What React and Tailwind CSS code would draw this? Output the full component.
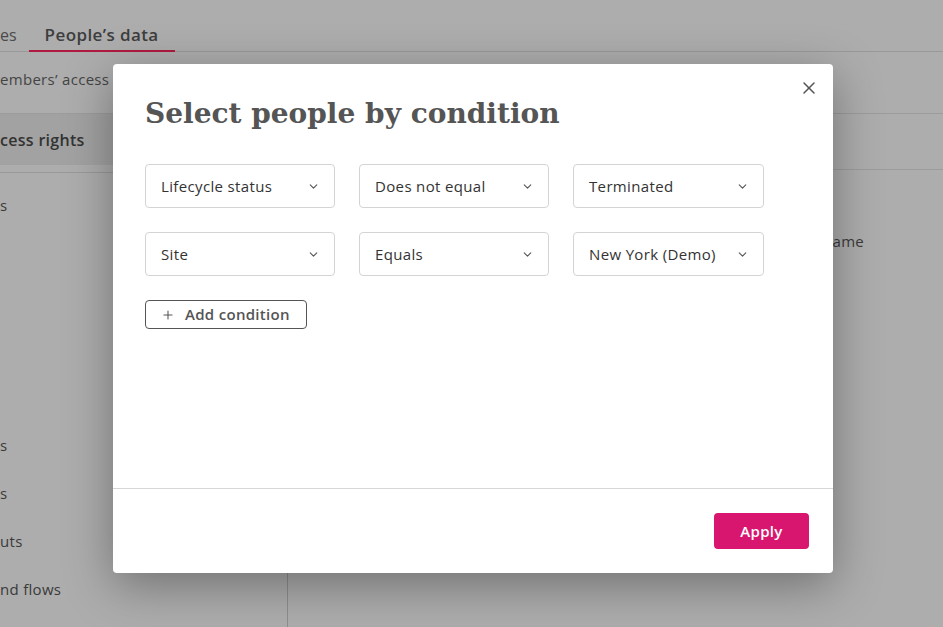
import { X, ChevronDown, Plus } from 'lucide-react';

const ROWS = [
  ['Lifecycle status', 'Does not equal', 'Terminated'],
  ['Site', 'Equals', 'New York (Demo)'],
];

function Select({ value }) {
  return (
    <div className="h-[44px] border border-[#d4d4d4] rounded-[4px] flex items-center justify-between pl-[15px] pr-[14px] text-[15px] tracking-[0.35px] text-[#333]">
      <span>{value}</span>
      <ChevronDown className="w-[13px] h-[13px] text-[#555]" strokeWidth={2} />
    </div>
  );
}

export default function App() {
  return (
    <div className="relative w-[943px] h-[627px] overflow-hidden bg-[#adadad] text-[#3a3a3a] font-['Open_Sans','Liberation_Sans',sans-serif]">
      {/* page behind the overlay */}
      <div className="h-[52px] border-b border-[#999] flex items-end">
        <span className="text-[16px] pb-[4px] text-[#4a4a4a]">es</span>
        <span className="ml-[12px] px-[16px] pb-[3px] text-[17px] tracking-[0.4px] font-semibold text-[#3d3d3d] border-b-2 border-[#b01a40] -mb-[1px]">People’s data</span>
      </div>
      <div className="h-[62px] border-b border-[#9c9c9c] flex items-center text-[15px] tracking-[0.3px] text-[#444] pb-[7px]">
        embers’ access to people’s data
      </div>
      <div className="flex h-full">
        <div className="w-[288px] border-r border-[#8e8e8e] shrink-0">
          <div className="h-[51px] bg-[#a2a2a2] flex items-center text-[16px] tracking-[0.3px] font-semibold text-[#333]">cess rights</div>
          <div className="h-[8px] border-b border-[#999]" />
          <div className="text-[15px] tracking-[0.3px] font-medium text-[#3a3a3a] pt-[8px]">
            <div className="h-[48px] flex items-center">s</div>
            <div className="h-[192px]" />
            <div className="h-[48px] flex items-center">s</div>
            <div className="h-[48px] flex items-center">s</div>
            <div className="h-[48px] flex items-center">uts</div>
            <div className="h-[48px] flex items-center">nd flows</div>
          </div>
        </div>
        <div className="flex-1">
          <div className="h-[56px] border-b border-[#9c9c9c]" />
          <div className="pt-[60px] pl-[535px] text-[15px] tracking-[0.3px] text-[#3a3a3a]">name</div>
        </div>
      </div>

      {/* modal */}
      <div className="absolute left-[113px] top-[64px] w-[720px] h-[509px] bg-white rounded-[4px] shadow-[0_12px_48px_rgba(0,0,0,0.35)] flex flex-col">
        <button className="absolute right-[14px] top-[14px] text-[#555]">
          <X className="w-[20px] h-[20px]" strokeWidth={1.8} />
        </button>
        <div className="flex-1 px-[32px] pt-[30px]">
          <h2 className="font-['DejaVu_Serif',serif] font-bold text-[28px] leading-[40px] text-[#555]">
            Select people by condition
          </h2>
          <div className="mt-[30px] flex flex-col gap-[24px] w-[620px]">
            {ROWS.map((row, i) => (
              <div key={i} className="grid grid-cols-[190px_190px_191px] gap-x-[24px]">
                {row.map((v) => <Select key={v} value={v} />)}
              </div>
            ))}
          </div>
          <button className="mt-[24px] h-[29px] w-[162px] border border-[#555] rounded-[4px] flex items-center pl-[15px] gap-[10px] text-[15px] tracking-[0.3px] font-semibold text-[#555]">
            <Plus className="w-[14px] h-[14px]" strokeWidth={1.8} />
            Add condition
          </button>
        </div>
        <div className="h-[85px] border-t border-[#d6d6d6] flex items-center justify-end pr-[24px]">
          <button className="h-[36px] w-[95px] bg-[#d9166f] rounded-[4px] text-white text-[15px] tracking-[0.3px] font-semibold">Apply</button>
        </div>
      </div>
    </div>
  );
}
